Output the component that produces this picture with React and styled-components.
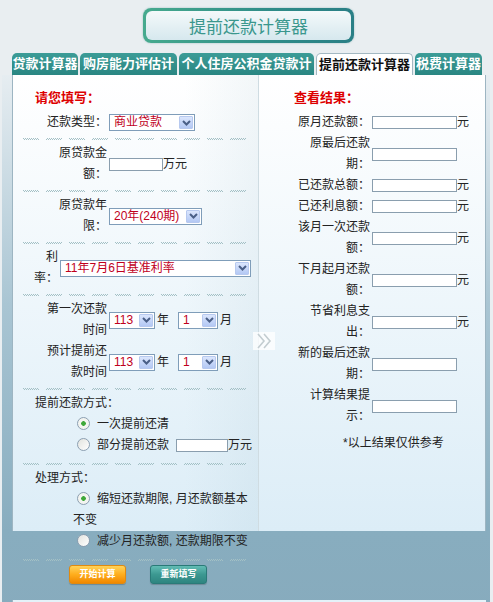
import React from "react";
import styled, { createGlobalStyle } from "styled-components";

const GlobalStyle = createGlobalStyle`
  html, body {
    margin: 0;
    padding: 0;
    background: #e9eef1;
  }
  body {
    font-family: "Liberation Sans", "Noto Sans CJK SC", sans-serif;
    font-size: 12px;
    color: #222;
  }
`;

const Page = styled.div`
  width: 493px;
  height: 602px;
  overflow: hidden;
  padding-top: 8px;
  box-sizing: border-box;
`;

const TitleBox = styled.div`
  width: 211px;
  height: 35px;
  margin-left: 143px;
  box-sizing: border-box;
  padding: 3px;
  border-radius: 8px;
  background: linear-gradient(90deg, #46aa8e, #2f8c88 60%, #2a7f86);
  box-shadow: 0 0 2px rgba(40, 120, 120, 0.4);
`;

const TitleInner = styled.div`
  height: 100%;
  border-radius: 6px;
  background: linear-gradient(#f4f9fa, #d6e8ee);
  display: flex;
  align-items: center;
  justify-content: center;
  color: #3a978d;
  font-size: 17px;
`;

const TabBar = styled.div`
  display: flex;
  gap: 2px;
  height: 22px;
  margin-top: 10px;
  padding-left: 12px;
`;

const Tab = styled.div`
  width: ${(p) => p.$w}px;
  height: 22px;
  box-sizing: border-box;
  border-radius: 5px 5px 0 0;
  overflow: hidden;
  white-space: nowrap;
  text-align: center;
  font-size: 13px;
  font-weight: bold;
  color: ${(p) => (p.$active ? "#111" : "#fff")};
  background: ${(p) =>
    p.$active ? "#fff" : "linear-gradient(#3c9c97, #2a8682)"};
  border: ${(p) => (p.$active ? "1px solid #a3b8c2" : "none")};
  border-bottom: none;
  line-height: ${(p) => (p.$active ? "21px" : "22px")};
`;

const Frame = styled.div`
  margin: 0 3px 0 2px;
  padding: 0 4px 0 10px;
  background: linear-gradient(#e6edf1 0, #a9c5d3 230px, #88adbf 456px, #87abbd 100%);
`;

const Panel = styled.div`
  position: relative;
  display: flex;
  height: 456px;
  box-sizing: border-box;
  border-left: 1px solid #9db5c2;
  border-right: 1px solid #9db5c2;
  background: linear-gradient(#ffffff, #dcedf7);
`;

const LeftCol = styled.div`
  width: 245px;
  flex: none;
  padding-top: 12px;
  box-sizing: border-box;
  background: linear-gradient(90deg, rgba(255, 255, 255, 0) 70%, rgba(150, 185, 200, 0.12));
`;

const RightCol = styled.div`
  position: relative;
  flex: 1;
  padding-top: 12px;
  border-left: 1px solid #cfdce2;
`;

const Heading = styled.div`
  margin: 0 0 4px ${(p) => p.$indent}px;
  line-height: 21px;
  font-size: 13px;
  font-weight: bold;
  color: #dd0000;
`;

const FormRow = styled.div`
  display: flex;
  align-items: center;
  gap: 2px;
  margin-left: ${(p) => p.$indent}px;
  line-height: 21px;
`;

const Label = styled.div`
  width: ${(p) => p.$w}px;
  flex: none;
  text-align: right;
`;

const Field = styled.div`
  display: flex;
  align-items: center;
`;

const SelectBox = styled.div`
  display: flex;
  align-items: center;
  justify-content: space-between;
  width: ${(p) => p.$w}px;
  height: 17px;
  box-sizing: border-box;
  border: 1px solid #7f9db9;
  background: #fff;
  color: #c0001c;
  padding-left: 4px;
  line-height: 15px;
  white-space: nowrap;
`;

const ArrowBtn = styled.span`
  display: flex;
  align-items: center;
  justify-content: center;
  width: 14px;
  height: 13px;
  margin-right: 1px;
  box-sizing: border-box;
  border: 1px solid #b7c9ef;
  border-radius: 1px;
  background: linear-gradient(#dbe6fd, #b3c8f4);
`;

const TextBox = styled.span`
  display: inline-block;
  width: ${(p) => p.$w}px;
  height: 13px;
  box-sizing: border-box;
  border: 1px solid #8a9eae;
  background: #fff;
  vertical-align: middle;
  margin-left: ${(p) => p.$gap || 0}px;
`;

const Unit = styled.span`
  margin: ${(p) => p.$m || "0"};
`;

const Sep = styled.div`
  width: 230px;
  height: 2px;
  margin: 5px 0 3px 10px;
  background:
    repeating-linear-gradient(90deg, #a3c0c5 0 1px, transparent 1px 2px) 0 0 / 100% 1px no-repeat,
    repeating-linear-gradient(90deg, transparent 0 1px, #a3c0c5 1px 2px) 0 1px / 100% 1px no-repeat;
  mask-image: repeating-linear-gradient(90deg, #000 0 16px, transparent 16px 23px);
`;

const GroupTitle = styled.div`
  margin-left: 22px;
  line-height: 21px;
`;

const Group = styled.div`
  padding-bottom: 2px;
`;

const Option = styled.div`
  padding: 0 4px 0 60px;
  line-height: 21px;
`;

const Radio = styled.span`
  display: inline-block;
  width: 13px;
  height: 13px;
  box-sizing: border-box;
  border-radius: 50%;
  border: 1px solid #8c9fb1;
  background: ${(p) =>
    p.$checked
      ? "radial-gradient(circle, #3fa83a 0 2px, #f3f4f0 2.6px)"
      : "linear-gradient(135deg, #e2e3de, #ffffff)"};
  vertical-align: -2px;
  margin: 0 7px 0 4px;
`;

const Buttons = styled.div`
  display: flex;
  gap: 24px;
  margin: 4px 0 0 56px;
`;

const Button = styled.div`
  width: 57px;
  height: 19px;
  box-sizing: border-box;
  border-radius: 3px;
  border: 1px solid ${(p) => (p.$tone === "orange" ? "#e08a10" : "#2a7a78")};
  background: ${(p) =>
    p.$tone === "orange"
      ? "linear-gradient(#ffd35a, #ffad1c 50%, #f08800)"
      : "linear-gradient(#62bcb4, #3c9891 50%, #2e8580)"};
  box-shadow: 0 1px 1px rgba(0, 0, 0, 0.2);
  color: #fff;
  font-size: 9px;
  font-weight: bold;
  line-height: 17px;
  text-align: center;
`;

const ResultRow = styled.div`
  display: flex;
  align-items: center;
  gap: 2px;
  margin-left: 38px;
  line-height: 21px;
`;

const Note = styled.div`
  margin: 6px 0 0 84px;
  line-height: 21px;
`;

const Chevron = styled.div`
  position: absolute;
  left: -6px;
  top: 257px;
  width: 22px;
  height: 18px;
  background: rgba(255, 255, 255, 0.75);
  display: flex;
  align-items: center;
  justify-content: center;
`;

const Band = styled.div`
  height: 69px;
`;

const Strip = styled.div`
  height: 20px;
  background: #e4f2f9;
  border-left: 1px solid #9db5c2;
`;

function Select({ w, value }) {
  return (
    <SelectBox $w={w}>
      <span>{value}</span>
      <ArrowBtn>
        <svg width="9" height="6" viewBox="0 0 9 6">
          <polyline points="1,1 4.5,4.5 8,1" fill="none" stroke="#4a5f87" strokeWidth="2" />
        </svg>
      </ArrowBtn>
    </SelectBox>
  );
}

const tabs = [
  { w: 66, text: "贷款计算器" },
  { w: 97, text: "购房能力评估计" },
  { w: 135, text: "个人住房公积金贷款计" },
  { w: 97, text: "提前还款计算器", active: true },
  { w: 67, text: "税费计算器" },
];

const results = [
  { label: "原月还款额：", unit: true },
  { label: "原最后还款期：" },
  { label: "已还款总额：", unit: true },
  { label: "已还利息额：", unit: true },
  { label: "该月一次还款额：", unit: true },
  { label: "下月起月还款额：", unit: true },
  { label: "节省利息支出：", unit: true },
  { label: "新的最后还款期：" },
  { label: "计算结果提示：" },
];

export default function App() {
  return (
    <Page>
      <GlobalStyle />
      <TitleBox>
        <TitleInner>提前还款计算器</TitleInner>
      </TitleBox>
      <TabBar>
        {tabs.map((t) => (
          <Tab key={t.text} $w={t.w} $active={t.active}>
            {t.text}
          </Tab>
        ))}
      </TabBar>
      <Frame>
        <Panel>
          <LeftCol>
            <Heading $indent={22}>请您填写：</Heading>
            <FormRow $indent={33}>
              <Label $w={61}>还款类型：</Label>
              <Select w={86} value="商业贷款" />
            </FormRow>
            <Sep />
            <FormRow $indent={33}>
              <Label $w={61}>原贷款金额：</Label>
              <Field>
                <TextBox $w={54} />
                <Unit>万元</Unit>
              </Field>
            </FormRow>
            <Sep />
            <FormRow $indent={33}>
              <Label $w={61}>原贷款年限：</Label>
              <Select w={93} value="20年(240期)" />
            </FormRow>
            <Sep />
            <FormRow $indent={20}>
              <Label $w={25}>利率：</Label>
              <Select w={191} value="11年7月6日基准利率" />
            </FormRow>
            <Sep />
            <FormRow $indent={33}>
              <Label $w={61}>第一次还款时间</Label>
              <Field>
                <Select w={46} value="113" />
                <Unit $m="0 9px 0 2px">年</Unit>
                <Select w={40} value="1" />
                <Unit $m="0 0 0 2px">月</Unit>
              </Field>
            </FormRow>
            <FormRow $indent={33}>
              <Label $w={61}>预计提前还款时间</Label>
              <Field>
                <Select w={46} value="113" />
                <Unit $m="0 9px 0 2px">年</Unit>
                <Select w={40} value="1" />
                <Unit $m="0 0 0 2px">月</Unit>
              </Field>
            </FormRow>
            <Sep />
            <Group>
              <GroupTitle>提前还款方式：</GroupTitle>
              <Option>
                <Radio $checked />
                一次提前还清
              </Option>
              <Option>
                <Radio />
                部分提前还款
                <TextBox $w={52} $gap={7} />
                万元
              </Option>
            </Group>
            <Sep />
            <Group>
              <GroupTitle>处理方式：</GroupTitle>
              <Option>
                <Radio $checked />
                缩短还款期限, 月还款额基本不变
              </Option>
              <Option>
                <Radio />
                减少月还款额, 还款期限不变
              </Option>
            </Group>
            <Sep />
            <Buttons>
              <Button $tone="orange">开始计算</Button>
              <Button $tone="teal">重新填写</Button>
            </Buttons>
          </LeftCol>
          <RightCol>
            <Chevron>
              <svg width="18" height="16" viewBox="0 0 18 16">
                <polyline points="3,1 9,8 3,15" fill="none" stroke="#c3cdd1" strokeWidth="1.6" />
                <polyline points="9,1 15,8 9,15" fill="none" stroke="#c3cdd1" strokeWidth="1.6" />
              </svg>
            </Chevron>
            <Heading $indent={35}>查看结果：</Heading>
            {results.map((r) => (
              <ResultRow key={r.label}>
                <Label $w={73}>{r.label}</Label>
                <Field>
                  <TextBox $w={85} />
                  {r.unit && <Unit>元</Unit>}
                </Field>
              </ResultRow>
            ))}
            <Note>*以上结果仅供参考</Note>
          </RightCol>
        </Panel>
        <Band />
        <Strip />
      </Frame>
    </Page>
  );
}
